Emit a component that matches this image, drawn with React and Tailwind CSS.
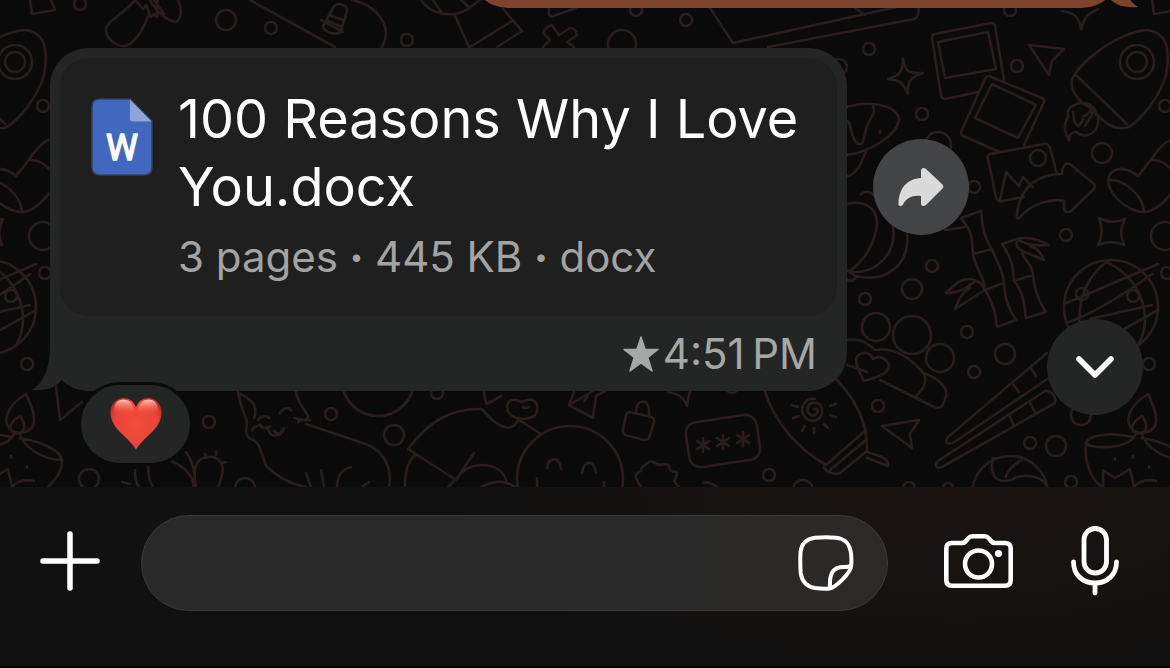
import React from "react";

const DOTS = [
  [80, 4, 6], [226, 20, 10], [271, 28, 6], [1165, 106, 6], [407, 40, 6], [636, 10, 6], [686, 20, 6], [622, 44, 14],
  [1010, 10, 6], [869, 49, 6], [839, 67, 8], [1017, 66, 6], [922, 114, 6], [938, 145, 13], [1038, 158, 8],
  [1102, 153, 10], [974, 187, 6], [1066, 235, 6], [1165, 236, 14], [932, 266, 6], [912, 289, 10], [865, 299, 6],
  [876, 327, 14], [912, 335, 19], [940, 358, 14], [967, 332, 6], [1005, 354, 10], [974, 372, 6], [878, 406, 6],
  [1030, 443, 6], [1056, 446, 10], [1081, 415, 10], [1149, 364, 6], [1167, 273, 6], [1071, 482, 6], [209, 422, 6],
  [89, 479, 10], [331, 414, 6], [394, 435, 10], [378, 380, 36], [245, 488, 10], [769, 475, 6], [803, 490, 10],
  [437, 393, 6], [732, 387, 6], [909, 488, 6], [948, 488, 5], [1137, 62, 17], [1137, 62, 10], [1111, 307, 47],
  [1082, 294, 6], [1133, 296, 6], [570, 479, 53], [1010, 494, 38],
];

const LINES = [
  // box corner and sprout
  "M1152 0l2 14 23-4-4-10",
  "M135 0C125 14 103 22 106 32C110 44 122 49 130 44C140 36 147 22 149 12M135 0l8 9 3-4 5 12 3-3 3 3V0M150 0c6 12 18 21 26 22c7-5 5-16 2-22M154 0l10 14",
  // skateboard and boot
  "M250 0L335 47M352 0C376 5 394 26 382 47",
  "M333 8c3-6 14-5 14 3l-6 20c-3 5-17 2-18-5zM329 15l14 5M326 20l16 7M321 20l22 12",
  // balloon and flag
  "M421 0C430 14 452 19 468 9L480 0M433 0l9 13M461 0l8 7M455 16l14 31M503 9l19 22-25 16M512 21l-42 26M549 8v6c1 3 4 3 7 1l20-7",
  "M552 25c-4 1-10 6-8 9l6 6-7 7M552 25l7 10 11-7c5 0 8 5 6 8l-9 6 7 5",
  "M710 8l23 35 182-40M768 47l146-28c5-2 5-8 4-14M855 8l10 7",
  // sparkles
  "M1062 11c12 2 17 5 19 18c3-12 7-15 17-20M903 59c2 12 5 15 20 14c-12 4-16 8-15 21c-5-12-9-14-20-15c11-3 15-7 15-20z",
  "M1099 218c9 5 17 5 26 1c-5 9-5 17-1 26c-9-4-17-4-26 0c5-9 5-17 1-27z",
  // photo frames
  "M978 92l-33 7c-2 0-3-1-4-3l-9-58c0-2 1-4 3-4l56-11c2 0 4 1 4 3l9 54M938 42l50-10 8 37-51 9zM989 76l53 22c2 1 3 2 2 4l-20 43M989 76c-2 0-3 1-4 3l-24 53c0 2 1 3 2 4l37 16M992 84l44 21-18 33-43-20z",
  "M1029 45l35 4-12 12-3 14zM882 426l37-6-9 14 2 14z",
  // rocket
  "M1147 30C1166 32 1171 48 1166 75C1160 96 1142 119 1129 127C1114 132 1103 122 1091 108C1078 102 1070 90 1072 80C1078 64 1115 33 1147 30zM1077 76l50 48",
  "M1080 103c-8 2-14 6-12 14c-5 8-4 15 1 23c0-5 3-8 7-8c10 8 24 1 22-15M1080 103c8-1 16 4 16 12M1073 112c1 8 0 10 5 14c4-3 6-6 5-10c3 0 7-3 9-9c2 10-4 12-7 19",
  // sock
  "M1173 139C1160 143 1155 156 1138 176C1128 168 1115 165 1109 176C1104 192 1128 213 1145 212C1160 210 1170 194 1180 184M1110 180C1124 180 1142 194 1144 211M1152 160C1163 160 1168 166 1174 172",
  // mushroom
  "M847 107C870 100 898 105 899 120C897 135 870 152 847 155M873 106c4 10-7 14-8 28c-2 15-9 12-13 0c-1-7-3-12-5-13M866 151c-4 10-8 22-18 25M880 131v2",
  // picture and arrow
  "M1057 174l-7-26c-1-3-3-5-6-4l-54 10c-2 1-3 3-2 5l8 38c1 4 3 5 6 4l22-4M1000 200l6-28 13 14 4-9 10 10",
  "M1019 218C1032 203 1052 198 1064 201V208C1065 213 1069 213 1072 210L1094 189C1095 187 1095 186 1094 184L1070 164C1066 162 1062 166 1062 174C1040 174 1020 185 1017 214C1016 218 1018 219 1019 218z",
  // pumpkin
  "M847 204C860 200 876 205 877 222C876 245 862 262 850 271M861 194c4-4 12-2 15 4M893 226C897 250 880 274 850 272M907 232C910 262 890 284 855 276L847 270M847 280c6 2 8 0 9-4",
  // bamboo
  "M945 230l20-3M961 218l20-7C982 225 985 240 992 249L973 254C972 240 972 232 966 225zM973 254C976 270 984 275 985 290L1004 283C1003 268 996 262 992 249M985 290C994 305 996 315 997 327L1016 320C1008 308 1005 298 1004 283",
  "M1017 239L1002 244C1012 258 1013 268 1014 281L1033 275C1033 265 1026 262 1022 253M1014 281C1024 292 1024 306 1026 318L1046 312C1038 300 1034 290 1033 275M985 290C978 276 966 278 958 282L946 293C960 294 968 286 976 281M985 290L955 309C958 300 962 292 970 288M1017 239C1030 236 1040 240 1048 245C1038 246 1028 246 1019 240M1017 242C1014 250 1026 252 1044 260C1040 250 1034 247 1030 246",
  // globe
  "M1064 304l94-40M1066 323c30-10 60-30 86-49M1090 319l62-14M1110 260c-34 20-38 70-20 90M1106 262c30 12 50 50 32 84M1119 332l39-22",
  // caterpillar and heart
  "M847 340c14-2 20 3 28 10c22-3 36 10 46 20c8 8 4 18-5 26M847 365l20 7M923 373c14 4 28 16 22 26c-2 8-6 10-11 8l-54-27",
  "M864 381c-4-8-10-18-7-24c4-6 13-6 16 2c6-4 14-1 16 7c0 8-15 12-25 15z",
  // chopsticks
  "M1047 353L948 437c-4 5-1 8 5 6L1062 369M1045 391L938 461c-4 4-2 8 4 6L1055 403c2-5-3-13-10-12zM1030 367l6 9M1012 383l7 9M1030 403l5 9M1009 415l5 10",
  // oil lamp
  "M1148 394c-20 12-24 28-15 36c8 6 22 2 23-8c1-10-4-18-8-28zM1142 416c-8 5-11 10-9 14c3 5 11 4 13-1c1-5-1-9-4-13zM1132 437c-14-4-40-4-46 5c0 6 30 8 44-1c5-3 5-6 6-8M1142 434c3 12 22 26 42 26c-2-10-20-18-42-22M1086 442c-2 20 4 36 16 45M1103 487v-17l12 8 15-9 4 18M1134 487c6-7 14-8 22-6M1184 460c0 14-8 20-14 27",
  "M1115 458v2M1133 456v2M1149 466v2M993 458c-4 18 4 26 18 22c14-8 30-4 36 6M1006 477c2-8 10-14 16-17",
  // sun cream
  "M764 388C774 424 800 450 826 465L866 430M837 380C856 400 868 424 867 452M824 467c2 5 10 8 16 6l27-22M830 470l36-30M867 452l15 5c5 2 6 6 6 9l-21-8",
  "M814 409c4-1 5 4 1 6c-5 2-9-3-7-8c3-7 13-5 14 2c2 10-10 16-17 8c-8-10 2-20 10-18M792 405l6 2M793 418l6-2M802 431l3-5M814 433v-5M828 428l-4-4M836 417l-6-2M836 404l-6 2",
  // keypad card, lock and cog
  "M697 422c-8 1-12 6-11 14l3 20c1 8 7 12 14 11l46-7c8-1 12-6 11-14l-3-20c-1-7-6-12-14-11zM703 438v14M697 441l12 8M697 449l12-8M723 435v14M717 438l12 8M717 446l12-8M743 432v14M737 435l12 8M737 443l12-8",
  "M630 412l21 5c3 1 3 2 3 5l-5 16c-1 2-3 2-5 2l-19-5c-2-1-2-3-2-5l3-15c1-2 2-3 4-3M636 412c0-14 14-14 13 0v4M569 405l24 13 3-22 9-5M569 405l5-13M584 401l4-5M668 392c10 2 15 4 19 14c1-6 1-10 3-14",
  "M641 487c-3-4-3-6-5-9c-1-4 2-6 5-7c0-6 7-7 8-9c2-3 7 2 10 3c5-1 9-2 10 1c0 4 2 6 7 6c2 2 0 6-2 9l5 6M704 483c4-2 8 0 14 5",
  "M547 468c2-12 12-12 14 1M582 473c2-13 12-14 14 0M537 478v9M604 482v5",
  // seated figure
  "M408 449C430 420 452 408 482 409C496 427 512 434 518 420M408 449l48 31 18-27M415 455c-8 8-10 18-10 32M456 480c10-20 44-20 50 0M519 420l22 14M484 392c0 6 1 9 3 12l14-8M508 403c4-6 10-2 14-1c6-4 14-3 15 4c1 10-4 12-14 13c-14-1-18-9-15-16zM523 407c2 2 4 1 6 0M481 487c16-8 26-6 34 0M448 487l8-8M593 391l-24 14",
  // fox and whale
  "M238 392c2 14 6 20 9 30c-1 8-2 14 4 17c7 2 9 8 15 27c10 10 24 18 40 21M240 394c14 6 18 14 14 24M252 430c4-6 6-2 8-6c2 6 8 4 10 2M268 428c2 10 10 10 16 0M258 420c4-5 8-5 11-2M280 413c4-6 8-6 11-3M296 392c1 10 8 16 12 24c0 8-10 2-14 2M298 422c4-4 4 0 12-2M306 424l60 20c20 8 26 26 23 43M274 431l5 4 4-4M306 473l5 14M321 470l3 17M337 487c0-12 6-18 14-20M362 487l7-5",
  // paper plane and cactus
  "M56 386l4 34 22-18M135 470c0 8 1 14 4 17M148 467c0 10 2 14 5 20M171 461c14 6 22 14 23 26M196 487c-4-20 0-32 18-30c14 6 8 20 4 30M206 458l-1-4M216 455v-4M222 463l4-1M122 482l8 2M186 452c6 8 10 20 8 30",
];

function Wallpaper() {
  return (
    <svg aria-hidden="true" className="absolute inset-0 h-full w-full" fill="none" stroke="#291e1c" strokeWidth="2.6" strokeLinecap="round" strokeLinejoin="round">
      <defs>
        <g id="doodles">
          {DOTS.map(([x, y, r], i) => (
            <circle key={i} cx={x} cy={y} r={r} />
          ))}
          {LINES.map((d, i) => (
            <path key={i} d={d} />
          ))}
        </g>
      </defs>
      <use href="#doodles" />
      <use href="#doodles" x="-1122" />
      <use href="#doodles" x="1122" />
    </svg>
  );
}

function WordFileIcon() {
  return (
    <svg viewBox="0 0 64 80" className="h-20 w-16 shrink-0" role="img" aria-label="Word document">
      <path d="M10 2h30l22 22v46q0 8-8 8H10q-8 0-8-8V10q0-8 8-8z" fill="#4068bf" stroke="#35415a" strokeWidth="1.5" />
      <path d="M40 2.500l21.500 22H43q-3 0-3-3z" fill="#8ca4d8" />
      <text x="32" y="63" textAnchor="middle" fill="#fff" stroke="#fff" strokeWidth="1.4" strokeLinejoin="round" fontFamily="Roboto, sans-serif" fontWeight="400" fontSize="36">W</text>
    </svg>
  );
}

function HeartIcon() {
  return (
    <svg viewBox="0 0 52 54" className="h-[54px] w-[52px]" role="img" aria-label="Red heart">
      <defs>
        <radialGradient id="heart" cx="0.5" cy="0.5" r="0.62">
          <stop offset="0" stopColor="#ee4f3c" />
          <stop offset="0.7" stopColor="#ea4436" />
          <stop offset="1" stopColor="#b9261d" />
        </radialGradient>
        <linearGradient id="shine" x1="0" y1="0" x2="0" y2="1">
          <stop offset="0" stopColor="#ffd5cb" stopOpacity="0.9" />
          <stop offset="1" stopColor="#f9604e" stopOpacity="0" />
        </linearGradient>
      </defs>
      <path d="M26 53C24 48 17 42 9.500 34.500C3.500 28.500 .5 22 .5 15.500C.5 7 6.500 1 14 1C19.500 1 24 4.500 26 10.500C28 4.500 32.500 1 38 1C45.500 1 51.500 7 51.500 15.500C51.500 22 48.500 28.500 42.500 34.500C35 42 28 48 26 53z" fill="url(#heart)" />
      <path d="M4 14C4 6 8 2.500 13.500 2.500S23 6 24 13C20 18 6 19 4 14zM48 14C48 6 44 2.500 38.500 2.500S29 6 28 13C32 18 46 19 48 14z" fill="url(#shine)" />
    </svg>
  );
}

export default function App() {
  return (
    <div className="flex min-h-screen flex-col bg-[#0a0a0a] font-['Inter','Liberation_Sans',sans-serif] text-white">
      <main className="relative flex-1 overflow-hidden">
        <Wallpaper />

        <div className="relative flex h-2 items-end justify-end overflow-hidden pr-[50px]">
          <div className="relative h-20 w-[650px] rounded-[38px] bg-[#7e432c]">
            <svg aria-hidden="true" viewBox="0 0 38 48" className="absolute -right-[18px] bottom-0 h-12 w-[38px]" fill="#7e432c">
              <path d="M20 0C20 26 26 39 38 47C25 48 15 45 9 38L6 0z" />
            </svg>
          </div>
        </div>

        <div className="relative flex items-start gap-[26px] pt-10 pb-24 pl-[50px] pr-6">
          <article className="relative w-full max-w-[797px] rounded-[38px] bg-[#242625] p-[10px] pb-0">
            <svg aria-hidden="true" viewBox="0 0 38 48" className="absolute bottom-0 -left-[18px] h-12 w-[38px]" fill="#242625">
              <path d="M18 0C18 26 12 39 0 47C13 48 23 45 29 38L32 0z" />
            </svg>

            <a href="#document" className="relative flex gap-6 rounded-[28px] bg-[#1f1f1f] pt-[27px] pr-5 pb-[29px] pl-[30px]">
              <span className="pt-3">
                <WordFileIcon />
              </span>
              <span className="flex flex-col gap-1.5">
                <span className="text-[54px] leading-[68px]">100 Reasons Why I Love You.docx</span>
                <span className="flex items-center text-[42px] leading-[60px] whitespace-pre text-[#a3a3a3]">
                  <span>3 pages </span>
                  <span className="text-2xl">•</span>
                  <span> 445 KB </span>
                  <span className="text-2xl">•</span>
                  <span> docx</span>
                </span>
              </span>
            </a>

            <footer className="flex h-[75px] items-center justify-end gap-1 pr-5 text-[42px] text-[#a6a8a7]">
              <svg viewBox="0 0 36 36" className="size-9" role="img" aria-label="Starred" fill="currentColor" stroke="currentColor" strokeWidth="1.500" strokeLinejoin="round">
                <path d="M18 1l4.200 12.500H35L24.800 21.500L29 35L18 27L7 35L11.200 21.500L1 13.500H13.800z" />
              </svg>
              <time dateTime="16:51">4:51&#8201;PM</time>
            </footer>

            <button type="button" aria-label="Reactions" className="absolute top-[334px] left-7 flex h-[84px] w-[115px] items-center justify-center rounded-full border-[3px] border-[#0a0a0a] bg-[#242625]">
              <HeartIcon />
            </button>
          </article>

          <button type="button" aria-label="Forward" className="mt-[91px] flex size-24 shrink-0 items-center justify-center rounded-full bg-[#434445]">
            <svg viewBox="0 0 46 40" className="h-10 w-[46px]" fill="#dadada">
              <path d="M23 3.500C23 .8 26 0 28 2L44.500 17.500Q46 19.500 44.500 21.500L28 38C26 40 23 39.200 23 36.500V29C14 28 8.500 31 5 37.500C3.500 40 .5 39.500 .5 37C.5 22 9 11.500 23 11z" />
            </svg>
          </button>
        </div>

        <button type="button" aria-label="Scroll to latest" className="absolute right-[27px] bottom-[72px] flex size-24 items-center justify-center rounded-full bg-[#242625]">
          <svg viewBox="0 0 38 24" className="h-6 w-[38px]" fill="none" stroke="#fff" strokeWidth="5.6" strokeLinecap="round" strokeLinejoin="round">
            <path d="M3 4l16 16L35 4" />
          </svg>
        </button>
      </main>

      <form onSubmit={(e) => e.preventDefault()} className="flex items-center border-b-2 border-black bg-[#111111] bg-[radial-gradient(ellipse_520px_220px_at_82%_0%,#1a1411,#111111)] pt-7 pr-[51px] pb-[55px] pl-10">
        <button type="button" aria-label="Attach" className="mr-[41px] pb-1">
          <svg viewBox="0 0 60 60" className="size-[60px]" fill="none" stroke="#fff" strokeWidth="5.500" strokeLinecap="round">
            <path d="M30 3v54M3 30h54" />
          </svg>
        </button>
        <div className="flex h-24 min-w-0 flex-1 items-center rounded-full border border-[#3b3b3b] bg-linear-to-r from-[#292929] from-65% to-[#2c2928] pr-[33px] pl-10">
          <input type="text" aria-label="Message" className="h-full min-w-0 flex-1 bg-transparent text-[42px] text-white outline-none" />
          <button type="button" aria-label="Stickers">
            <svg viewBox="0 0 56 56" className="size-14" fill="none" stroke="#fff" strokeWidth="4" strokeLinecap="round" strokeLinejoin="round">
              <path d="M31.500 53.500C37 53 53 38 53.200 30.500C53.600 25 53.500 20 52.500 15.500C50.500 7 46 3.500 38 2.700Q27 2 17 2.800C8 4 3.500 8.500 2.500 17Q2 28 2.700 38C4 47 8.500 51.500 17 53Q24 54 31.500 53.500z" />
              <path d="M31.500 53C32.500 50 31.500 46 32.500 42C33.800 36 37 33.200 42 32.300C46 31.700 50 33 53 30.500" />
            </svg>
          </button>
        </div>
        <button type="button" aria-label="Camera" className="ml-14 pb-1">
          <svg viewBox="0 0 69 54" className="h-[54px] w-[69px]" fill="none" stroke="#fff" strokeWidth="4.600" strokeLinejoin="round">
            <path d="M8 9H18Q20.500 9 22 7L24 4.500Q26 2.300 28.500 2.300H40.500Q43 2.300 45 4.500L47 7Q48.500 9 51 9H61Q66.700 9 66.700 14.500V46Q66.700 51.700 61 51.700H8Q2.300 51.700 2.300 46V14.500Q2.300 9 8 9z" />
            <circle cx="34.500" cy="30" r="13.500" />
            <circle cx="54.500" cy="19.500" r="3.600" fill="#fff" stroke="none" />
          </svg>
        </button>
        <button type="button" aria-label="Record voice message" className="ml-[58px] pb-1">
          <svg viewBox="0 0 48 70" className="h-[70px] w-12" fill="none" stroke="#fff" strokeWidth="4.800" strokeLinecap="round">
            <rect x="13" y="2.500" width="22.500" height="44.500" rx="11.250" />
            <path d="M2.500 36C2.500 49 12 57 24 57S45.500 49 45.500 36M24 57v10" />
          </svg>
        </button>
      </form>
    </div>
  );
}
